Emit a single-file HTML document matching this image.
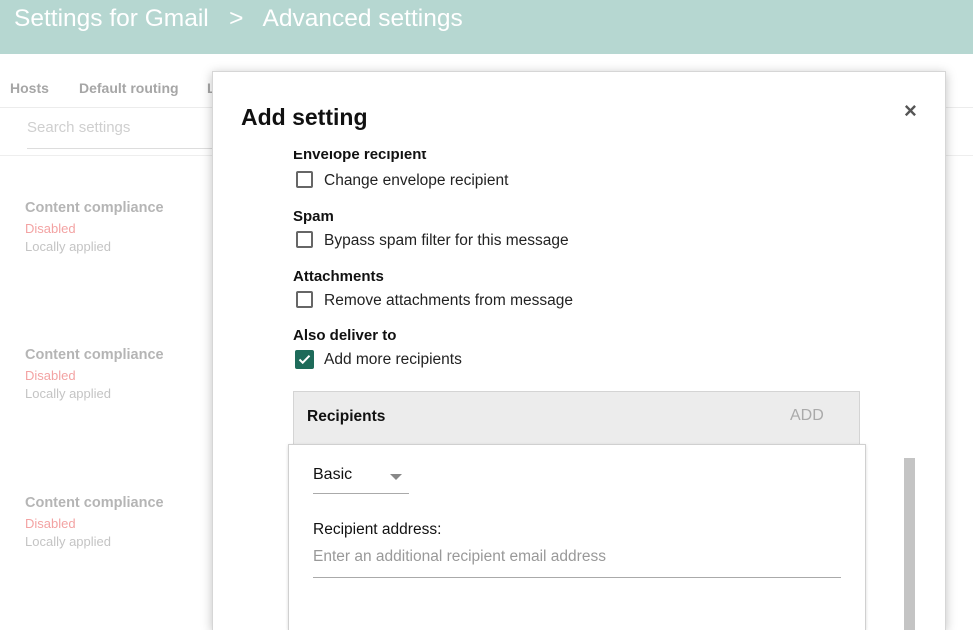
<!DOCTYPE html>
<html><head><style>
*{margin:0;padding:0;box-sizing:border-box}
html,body{width:973px;height:630px;overflow:hidden}
body{background:#fff;font-family:"Liberation Sans",Arial,sans-serif;position:relative}
.a{position:absolute;white-space:nowrap}
.hdr{left:0;top:0;width:973px;height:54px;background:#b6d7d1}
.cc{font-size:14.5px;font-weight:bold;color:#b5b5b5}
.dis{font-size:13px;color:#f3a3a3}
.loc{font-size:13px;color:#c4c4c4}
.modal{left:212px;top:71px;width:734px;height:559px;background:#fff;border:1px solid #d6d6d6;border-bottom:none;box-shadow:0 2px 10px rgba(0,0,0,.25)}
.lbl{font-size:15px;font-weight:bold;color:#111}
.cb{width:17px;height:17px;border:2px solid #666;border-radius:2px}
.opt{font-size:15.5px;color:#222}
</style></head><body>
<div class="a hdr"></div>
<div class="a" style="left:14px;top:5px;font-size:24.5px;color:#fff">Settings for Gmail &nbsp;&nbsp;&gt;&nbsp;&nbsp; Advanced settings</div>
<div class="a" style="left:10px;top:80px;font-size:14px;font-weight:bold;color:#a6a6a6">Hosts</div>
<div class="a" style="left:79px;top:80px;font-size:14px;font-weight:bold;color:#a6a6a6">Default routing</div>
<div class="a" style="left:207px;top:80px;font-size:14px;font-weight:bold;color:#a6a6a6">L</div>
<div class="a" style="left:0;top:107px;width:973px;height:1px;background:#ececec"></div>
<div class="a" style="left:27px;top:119px;font-size:15px;color:#cfcfcf">Search settings</div>
<div class="a" style="left:27px;top:148px;width:190px;height:1px;background:#ddd"></div>
<div class="a" style="left:0;top:155px;width:973px;height:1px;background:#eee"></div>
<div class="a cc" style="left:25px;top:200px">Content compliance</div>
<div class="a dis" style="left:25px;top:221px">Disabled</div>
<div class="a loc" style="left:25px;top:239px">Locally applied</div>
<div class="a cc" style="left:25px;top:347px">Content compliance</div>
<div class="a dis" style="left:25px;top:368px">Disabled</div>
<div class="a loc" style="left:25px;top:386px">Locally applied</div>
<div class="a cc" style="left:25px;top:495px">Content compliance</div>
<div class="a dis" style="left:25px;top:516px">Disabled</div>
<div class="a loc" style="left:25px;top:534px">Locally applied</div>

<div class="a modal"></div>
<div class="a" style="left:241px;top:104px;font-size:23px;font-weight:bold;color:#111">Add setting</div>
<div class="a" style="left:904px;top:98px;font-size:22px;color:#555;font-weight:bold">×</div>
<div class="a" style="left:293px;top:151px;width:300px;height:13px;overflow:hidden"><div class="lbl" style="margin-top:-5px">Envelope recipient</div></div>
<div class="a cb" style="left:296px;top:171px"></div>
<div class="a opt" style="left:324px;top:172px">Change envelope recipient</div>
<div class="a lbl" style="left:293px;top:208px">Spam</div>
<div class="a cb" style="left:296px;top:231px"></div>
<div class="a opt" style="left:324px;top:232px">Bypass spam filter for this message</div>
<div class="a lbl" style="left:293px;top:268px">Attachments</div>
<div class="a cb" style="left:296px;top:291px"></div>
<div class="a opt" style="left:324px;top:292px">Remove attachments from message</div>
<div class="a lbl" style="left:293px;top:327px">Also deliver to</div>
<div class="a" style="left:295px;top:350px;width:19px;height:19px;background:#1e6b5a;border-radius:2px">
<svg width="19" height="19" viewBox="0 0 19 19"><path d="M4.5 9.5l3.2 3.2 6.8-7" fill="none" stroke="#fff" stroke-width="2"/></svg></div>
<div class="a opt" style="left:324px;top:351px">Add more recipients</div>
<div class="a" style="left:293px;top:391px;width:567px;height:54px;background:#ececec;border:1px solid #d4d4d4"></div>
<div class="a" style="left:307px;top:408px;font-size:15.5px;font-weight:bold;color:#111">Recipients</div>
<div class="a" style="left:790px;top:407px;font-size:16px;color:#aaa">ADD</div>
<div class="a" style="left:288px;top:444px;width:578px;height:186px;background:#fff;border:1px solid #d0d0d0;border-bottom:none;box-shadow:0 1px 3px rgba(0,0,0,.15)"></div>
<div class="a" style="left:313px;top:466px;font-size:16px;color:#111">Basic</div>
<div class="a" style="left:390px;top:474px;width:0;height:0;border-left:6px solid transparent;border-right:6px solid transparent;border-top:6px solid #888"></div>
<div class="a" style="left:313px;top:493px;width:96px;height:1px;background:#aaa"></div>
<div class="a" style="left:313px;top:521px;font-size:15.5px;color:#111">Recipient address:</div>
<div class="a" style="left:313px;top:548px;font-size:15.5px;color:#999">Enter an additional recipient email address</div>
<div class="a" style="left:313px;top:577px;width:528px;height:1px;background:#aaa"></div>
<div class="a" style="left:904px;top:458px;width:11px;height:172px;background:#c4c4c4"></div>
</body></html>
